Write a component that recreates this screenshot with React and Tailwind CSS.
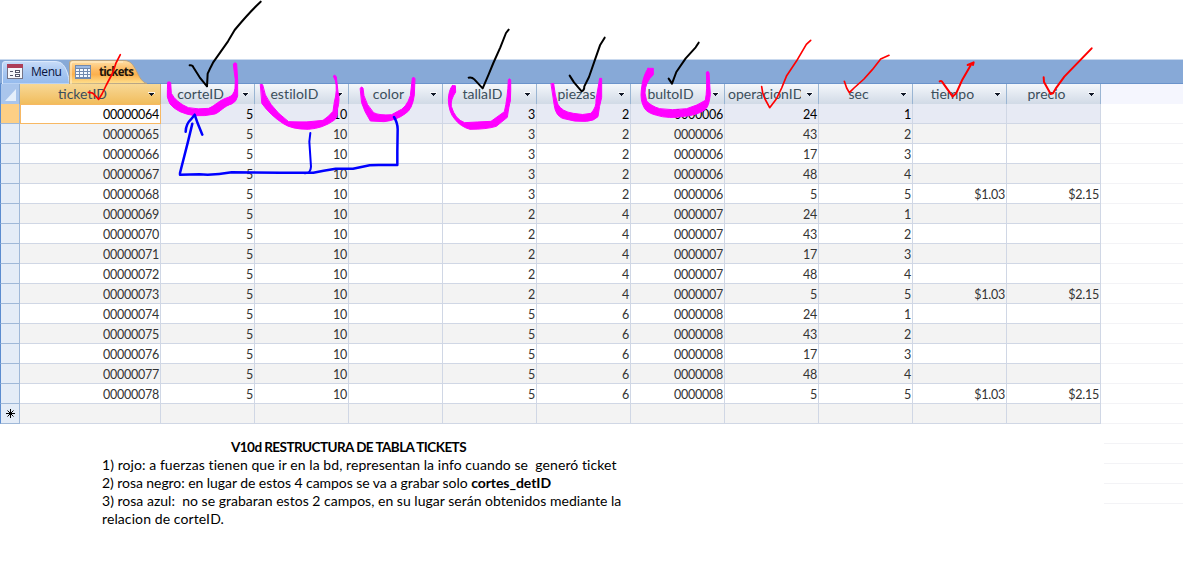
import React from "react";

const columns = [
  { name: "corteID", head: "tracking-[0.05px]" },
  { name: "estiloID", head: "tracking-[0.1px]" },
  { name: "color", head: "tracking-[0.1px]" },
  { name: "tallaID", head: "tracking-[0px]" },
  { name: "piezas", head: "tracking-[0px]" },
  { name: "bultoID", head: "tracking-[0px]" },
  { name: "operacionID", head: "tracking-[0px]" },
  { name: "sec", head: "tracking-[0px]" },
  { name: "tiempo", head: "tracking-[0px]" },
  { name: "precio", head: "tracking-[0px]" },
];

const groups = [
  ["3", "2", "0000006"],
  ["2", "4", "0000007"],
  ["5", "6", "0000008"],
];
const operations = ["24", "43", "17", "48", "5"];

const rows = groups.flatMap(([size, pieces, bundle], g) =>
  operations.map((op, i) => [
    "000000" + (64 + g * 5 + i),
    "5",
    "10",
    "",
    size,
    pieces,
    bundle,
    op,
    String(i + 1),
    i === 4 ? "$1.03" : "",
    i === 4 ? "$2.15" : "",
  ])
);
rows.push(Array(11).fill(""));

function Arrow() {
  return (
    <svg width="7" height="5" viewBox="0 0 7 5" className="shrink-0" shapeRendering="crispEdges">
      <path d="M0 0h7v1H0zM1 1h6v1H1z" fill="#fff" opacity=".8" />
      <path d="M1 1h5v1H1zM2 2h3v1H2zM3 3h1v1H3z" fill="#111827" />
    </svg>
  );
}

function Tabs() {
  return (
    <div className="relative flex h-[25px] border-t border-[#c9d9ee] border-b border-b-[#6a93cb] bg-[#87a9d7]">
      <svg className="absolute left-0 top-0" width="150" height="24" viewBox="0 0 150 24">
        <defs>
          <linearGradient id="blue" x2="0" y2="1">
            <stop offset="0" stopColor="#c8dcf8" />
            <stop offset=".45" stopColor="#a9c8f2" />
            <stop offset="1" stopColor="#94baed" />
          </linearGradient>
          <linearGradient id="gold" x2="0" y2="1">
            <stop offset="0" stopColor="#ffe0a8" />
            <stop offset=".4" stopColor="#fdbb63" />
            <stop offset=".6" stopColor="#fbb04e" />
            <stop offset="1" stopColor="#ffe391" />
          </linearGradient>
        </defs>
        <path d="M2.5 24V4Q2.5 1.5 5 1.5H55C63 1.5 65 7 67 12Q69 17 69.500 24Z" fill="url(#blue)" stroke="#dceafd" />
        <path d="M69.500 24V3Q69.500.5 72 .5H124C130 .5 133 4 137 12C140 18 142 22 147 23.500Z" fill="url(#gold)" stroke="#b8a382" />
        <path d="M71 24V4Q71 2 73 2H123" fill="none" stroke="#fff0cf" />
        <g shapeRendering="crispEdges">
          <rect x="7" y="4" width="16" height="15" fill="#747487" />
          <rect x="8" y="5" width="14" height="13" fill="#f6f7fb" />
          <rect x="7" y="4" width="16" height="4" fill="#ad3e58" />
          <path d="M10 11.500h3M10 15.500h3" stroke="#55566a" />
          <path d="M15.500 10.500h4v2h-4zM15.500 14.500h4v2h-4z" fill="#fff" stroke="#55566a" />
          <rect x="75" y="5" width="16" height="14" fill="#7189ae" />
          <rect x="76" y="6" width="14" height="2" fill="#9db9e2" />
          {[9, 12, 15].map((y) =>
            [76, 80, 84, 88].map((x) => <rect key={x + "-" + y} x={x} y={y} width={x > 84 ? 2 : 3} height="2" fill="#f5f9ff" />)
          )}
        </g>
      </svg>
      <div className="relative flex w-[69px] items-center pl-[31px] pt-[1px] font-['Open_Sans'] text-[12px] tracking-[-0.45px] text-[#08133d]">Menu</div>
      <div className="relative flex items-center pl-[30px] pt-[1px] font-['Open_Sans'] text-[11.5px] font-bold tracking-[-0.7px] text-[#20130a]">tickets</div>
    </div>
  );
}

function Header() {
  return (
    <div className="flex h-5 text-[14px] leading-5 text-[#3b4e5b]">
      <div className="flex w-5 items-end justify-end border-l border-[#5b8cd0] border-r border-r-[#8cabd0] bg-[#a9c5ec] pb-[3px] pr-[3px]">
        <svg width="11" height="12" viewBox="0 0 11 12"><path d="M11 0V12H0Z" fill="#e5effb" /></svg>
      </div>
      <div className="flex w-[141px] items-center border-r border-[#d0ad6b] bg-linear-to-b from-[#f7d895] to-[#f1bd5c] pr-[5px]">
        <div className="flex-1 pr-[3px] text-center">ticketID</div>
        <Arrow />
      </div>
      {columns.map((c) => (
        <div key={c.name} className="flex w-[94px] items-center border-r border-[#9ab5d3] bg-linear-to-b from-[#f4f7fb] to-[#d1dae6] pr-[5px]">
          <div className={"w-[76px] shrink-0 overflow-hidden whitespace-nowrap pl-[3px] text-center " + c.head}>{c.name}</div>
          <div className="ml-auto flex"><Arrow /></div>
        </div>
      ))}
      <div className="flex-1 bg-[#f5f6fe]" />
    </div>
  );
}

function Row({ cells, index }) {
  const tone = index === 0 ? "bg-[#e7eaf4] text-black" : index % 2 ? "bg-[#f3f3f3] text-[#333]" : "bg-white text-[#333]";
  return (
    <div className="flex h-5 text-[12.5px] leading-[21px] tracking-[-0.25px]">
      <div className={"flex w-5 items-center justify-center border-b border-l border-r border-b-[#9fb8d8] border-l-[#5b8cd0] border-r-[#9fb8d8] " + (index === 0 ? "bg-[#fdcf85]" : "bg-[#e4ecf7]")}>
        {index === 15 && (
          <svg width="9" height="9" viewBox="0 0 9 9" stroke="#000"><path d="M4.500 0v9M0 4.500h9M1.500 1.500l6 6M7.500 1.500l-6 6" /></svg>
        )}
      </div>
      {cells.map((v, i) => (
        <div
          key={i}
          className={
            (i === 0 ? "w-[141px] " : "w-[94px] ") +
            (index === 0 && i === 0
              ? "border border-[#f7b863] bg-white pr-[1px] text-right leading-[19px] text-black"
              : "border-b border-r border-[#d0d7e5] pr-[1px] text-right " + tone)
          }
        >
          {v}
        </div>
      ))}
      <div className="flex-1 border-b border-[#f3f3f6]" />
    </div>
  );
}

function Ink() {
  return (
    <svg className="pointer-events-none absolute left-0 top-0" width="1183" height="575" viewBox="0 0 1183 575" fill="none" strokeLinecap="round" strokeLinejoin="round">
      <g transform="translate(140 0) scale(.33333)">
        <g fill="#ff00ff" stroke="#ff00ff" strokeWidth="3">
          <path d="M84 246Q88 244 92 248L94 280Q108 307 145 323Q175 329 206 325C226 317 237 300 265 292Q282 286 285 265L286 240Q282 212 280 192Q285 185 290 191L293 240V288Q290 304 277 311C250 319 241 336 225 342Q195 349 164 347Q112 340 90 312Q78 292 82 270Z" />
          <path d="M362 253L368 254Q372 286 393 313Q414 342 446 365Q500 369 549 361Q566 350 579 334L583 306Q593 269 586 242L580 228Q584 222 589 230L594 275Q601 298 592 330Q594 353 582 361Q549 385 505 388Q455 388 430 371Q391 346 366 311Z" />
          <path d="M661 264Q665 258 669 264L672 287Q679 315 701 338Q718 347 755 344L773 334Q799 325 811 287L817 234Q822 229 825 236L823 285Q817 329 796 341Q769 361 732 365L691 363Q673 335 665 309Z" />
        </g>
        <path d="M149 196Q158 195 160 202L179 232 201 259 203 221Q210 205 219 188L264 124 284 90Q326 39 362 5" stroke="#000" strokeWidth="6" />
        <g stroke="#00f" strokeWidth="7.5">
          <path d="M137 395Q138 372 152 359L164 344 173 370 187 404M157 371L144 425 120 519 120 524 178 523Q220 527 275 517L420 518 520 518 551 512 587 506 639 506 689 496 716 495H772V455L773 388Q773 368 762 351" />
          <path d="M511 399L508 425 513 500Q512 521 494 520" strokeWidth="6" />
        </g>
      </g>
      <g transform="translate(430 20) scale(.33333)">
        <g fill="#ff00ff" stroke="#ff00ff" strokeWidth="3">
          <path d="M67 197L76 197 77 216Q61 240 64 259Q75 298 104 308Q140 306 183 304L201 291 223 275Q233 235 235 179Q239 173 242 180Q243 209 241 243Q237 257 232 292Q216 305 199 319Q170 328 120 328Q91 320 74 297Q56 277 55 239Q56 210 67 197Z" />
          <path d="M364 191L371 190Q375 229 383 252Q395 275 430 280Q459 287 483 280Q500 261 498 239L509 175H515V232Q508 257 504 290Q493 302 470 304Q435 307 397 295Q377 286 373 258Z" />
          <path d="M654 145H670V164Q645 187 645 219L650 243Q663 258 689 266Q726 272 770 266Q804 256 826 241Q832 210 829 157Q833 152 837 157L841 223Q837 262 824 270Q800 286 763 289Q714 297 680 286Q651 279 643 264Q630 242 634 210Q638 168 654 145Z" />
        </g>
        <g stroke="#000" strokeWidth="6">
          <path d="M116 173Q126 171 133 178L158 205 176 163 190 129 211 82 228 39 236 29" />
          <path d="M419 167L432 187 455 214Q463 212 463 199L477 171 495 119 510 76 524 53" />
          <path d="M716 176L726 191 739 156 767 115 797 82 806 68" />
        </g>
      </g>
      <g stroke="#f00" strokeWidth="5">
        <path transform="translate(0 50) scale(.33333)" d="M265 127Q279 127 284 135L296 148 306 132 319 105 338 69 348 39 361 14" />
        <g transform="translate(700 30) scale(.33333)">
          <path d="M185 170L188 188 195 207 209 233 229 207 245 174 260 137 289 94 319 43 332 31" />
          <path d="M433 154L440 174 448 188 462 174 492 147 517 119 542 87 567 76" />
        </g>
        <g transform="translate(900 30) scale(.33333)" strokeWidth="6">
          <path d="M119 154Q125 151 128 158L149 187 158 200 169 189 187 149 213 104M203 105L221 97 219 105" />
          <path d="M431 142L432 156 452 192 459 190 467 176 493 140 575 55" />
        </g>
      </g>
    </svg>
  );
}

export default function App() {
  return (
    <div className="relative h-[575px] w-[1183px] overflow-hidden bg-white pt-[59px] font-['Lato','Liberation_Sans',sans-serif]">
      <Tabs />
      <Header />
      {rows.map((cells, i) => (
        <Row key={i} cells={cells} index={i} />
      ))}
      <div className="flex">
        <div className="w-[1104px] whitespace-pre pl-[102px] pt-[14px] text-[14px] leading-[18px] text-black">
          <div className="pl-[129px] text-[13.5px] font-bold tracking-[-0.55px]">V10d RESTRUCTURA DE TABLA TICKETS</div>
          <div className="tracking-[0.07px]">1) rojo: a fuerzas tienen que ir en la bd, representan la info cuando se  generó ticket</div>
          <div className="tracking-[-0.06px]">2) rosa negro: en lugar de estos 4 campos se va a grabar solo <b>cortes_detID</b></div>
          <div className="tracking-[0.02px]">3) rosa azul:  no se grabaran estos 2 campos, en su lugar serán obtenidos mediante la</div>
          <div className="tracking-[0.1px]">relacion de corteID.</div>
        </div>
        <div className="flex-1">
          {[0, 1, 2, 3].map((i) => (
            <div key={i} className="h-5 border-b border-[#f3f3f6]" />
          ))}
        </div>
      </div>
      <Ink />
    </div>
  );
}
